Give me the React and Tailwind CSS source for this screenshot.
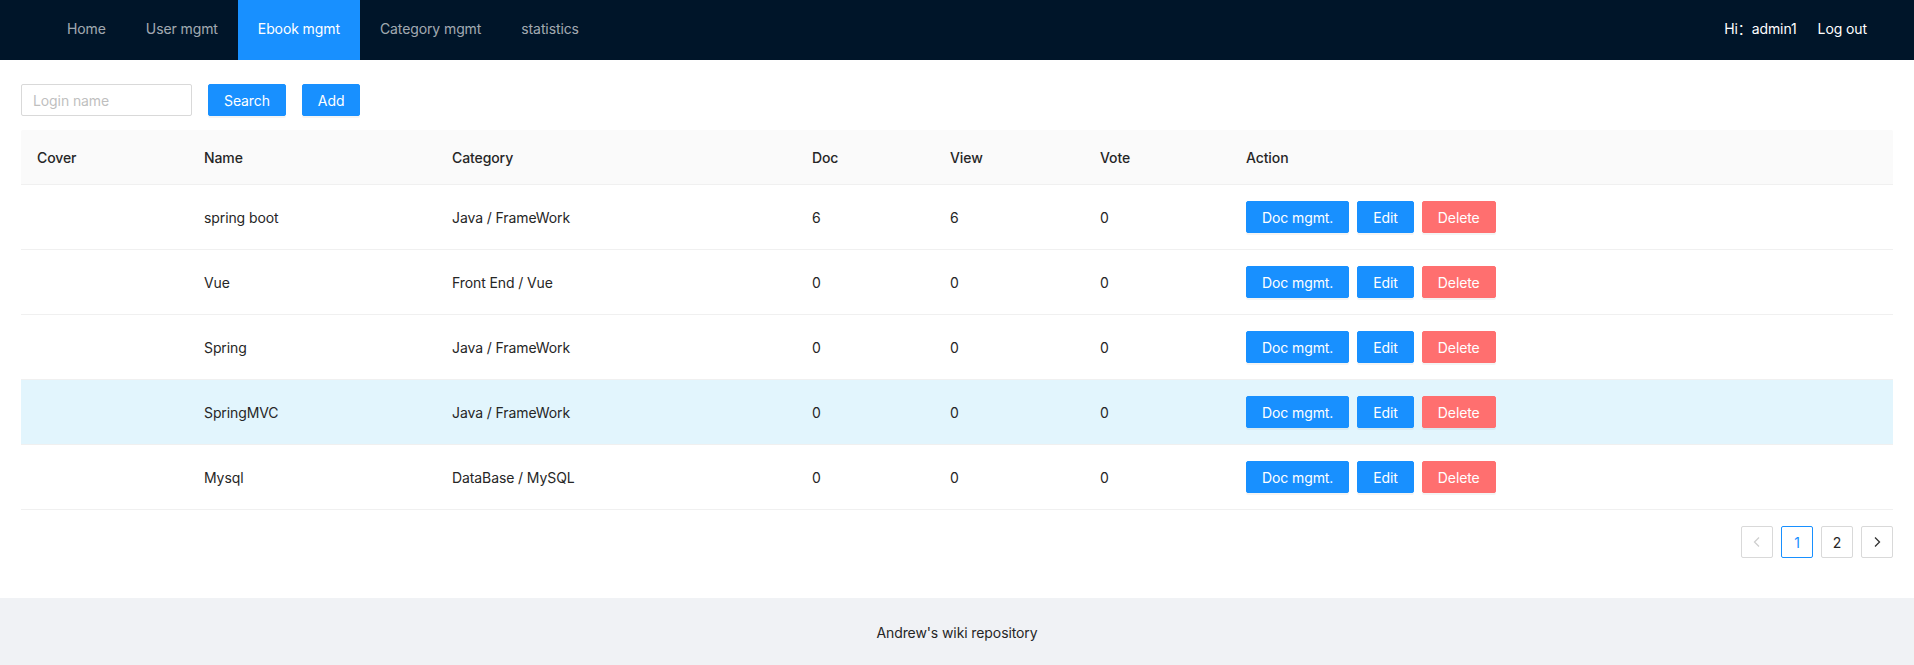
import React from "react";

const rows = [
  { name: "spring boot", cat: "Java / FrameWork", doc: 6, view: 6, vote: 0 },
  { name: "Vue", cat: "Front End / Vue", doc: 0, view: 0, vote: 0 },
  { name: "Spring", cat: "Java / FrameWork", doc: 0, view: 0, vote: 0 },
  { name: "SpringMVC", cat: "Java / FrameWork", doc: 0, view: 0, vote: 0, hl: true },
  { name: "Mysql", cat: "DataBase / MySQL", doc: 0, view: 0, vote: 0 },
];

const cols = "grid grid-cols-[167px_248px_360px_138px_150px_146px_1fr]";

function Chevron({ dir, color }) {
  return (
    <svg width="12" height="12" viewBox="0 0 12 12" fill="none">
      {dir === "left" ? (
        <polyline points="8,1.5 3.5,6 8,10.5" stroke={color} strokeWidth="1.3" />
      ) : (
        <polyline points="4,1.5 8.5,6 4,10.5" stroke={color} strokeWidth="1.3" />
      )}
    </svg>
  );
}

export default function App() {
  const nav = ["Home", "User mgmt", "Ebook mgmt", "Category mgmt", "statistics"];
  return (
    <div className="flex flex-col bg-white text-[14px] tracking-[-0.1px] text-[#262626] font-['Inter','Noto_Sans_CJK_SC',sans-serif]">
      <header className="h-[60px] bg-[#001529] flex items-stretch justify-between pl-[47px] pr-[47px]">
        <nav className="flex items-stretch">
          {nav.map((n) => (
            <div
              key={n}
              className={
                "px-5 pb-1 flex items-center " +
                (n === "Ebook mgmt" ? "bg-[#1890ff] text-white" : "text-[rgba(255,255,255,0.65)]")
              }
            >
              {n}
            </div>
          ))}
        </nav>
        <div className="flex items-center pb-1 gap-[21px] text-white">
          <span>Hi：admin1</span>
          <span>Log out</span>
        </div>
      </header>

      <main className="pt-6 pb-10 px-[21px]">
        <div className="flex items-center gap-4">
          <input
            placeholder="Login name"
            className="w-[171px] h-8 border border-[#d9d9d9] rounded-[2px] px-[11px] text-[14px] placeholder:text-[#bfbfbf] outline-none"
          />
          <button className="h-8 px-[15px] rounded-[2px] bg-[#1890ff] text-white border border-[#1890ff] shadow-[0_2px_0_rgba(0,0,0,0.045)]">
            Search
          </button>
          <button className="h-8 px-[15px] rounded-[2px] bg-[#1890ff] text-white border border-[#1890ff] shadow-[0_2px_0_rgba(0,0,0,0.045)]">
            Add
          </button>
        </div>

        <div className="mt-[14px]">
          <div className={cols + " h-[55px] items-center bg-[#fafafa] border-b border-[#f0f0f0] rounded-t-[2px] font-medium"}>
            {["Cover", "Name", "Category", "Doc", "View", "Vote", "Action"].map((h) => (
              <div key={h} className="px-4">{h}</div>
            ))}
          </div>
          {rows.map((r) => (
            <div
              key={r.name}
              className={cols + " h-[65px] items-center border-b border-[#f0f0f0] " + (r.hl ? "bg-[#e2f5fd]" : "bg-white")}
            >
              <div className="px-4"></div>
              <div className="px-4">{r.name}</div>
              <div className="px-4">{r.cat}</div>
              <div className="px-4">{r.doc}</div>
              <div className="px-4">{r.view}</div>
              <div className="px-4">{r.vote}</div>
              <div className="px-4 flex items-center gap-2">
                <button className="h-8 px-[15px] rounded-[2px] bg-[#1890ff] text-white border border-[#1890ff] shadow-[0_2px_0_rgba(0,0,0,0.045)]">
                  Doc mgmt.
                </button>
                <button className="h-8 px-[15px] rounded-[2px] bg-[#1890ff] text-white border border-[#1890ff] shadow-[0_2px_0_rgba(0,0,0,0.045)]">
                  Edit
                </button>
                <button className="h-8 px-[15px] rounded-[2px] bg-[#ff6f6f] text-white border border-[#ff6f6f] shadow-[0_2px_0_rgba(0,0,0,0.045)]">
                  Delete
                </button>
              </div>
            </div>
          ))}
        </div>

        <div className="mt-4 flex justify-end gap-2">
          <div className="w-8 h-8 border border-[#d9d9d9] rounded-[2px] flex items-center justify-center">
            <Chevron dir="left" color="#cfcfcf" />
          </div>
          <div className="w-8 h-8 border border-[#1890ff] rounded-[2px] flex items-center justify-center text-[#1890ff]">
            1
          </div>
          <div className="w-8 h-8 border border-[#d9d9d9] rounded-[2px] flex items-center justify-center">
            2
          </div>
          <div className="w-8 h-8 border border-[#d9d9d9] rounded-[2px] flex items-center justify-center">
            <Chevron dir="right" color="#333333" />
          </div>
        </div>
      </main>

      <footer className="h-[67px] bg-[#f0f2f5] pt-6 text-center leading-[22px]">
        Andrew's wiki repository
      </footer>
    </div>
  );
}
